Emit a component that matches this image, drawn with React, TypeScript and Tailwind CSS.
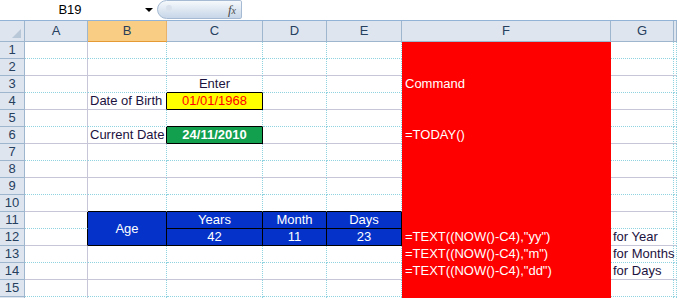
import React from "react";

type BType = "solid" | "dotted" | "black" | "red" | "none";

const RCLS: Record<BType, string> = {
  solid: "border-r border-r-[#c6c6d8]",
  dotted: "border-r border-r-[#8ed3df] [border-right-style:dotted]",
  black: "border-r border-r-black",
  red: "border-r border-r-[#ff0000]",
  none: "border-r border-r-transparent",
};
const BCLS: Record<BType, string> = {
  solid: "border-b border-b-[#c6c6d8]",
  dotted: "border-b border-b-[#8ed3df] [border-bottom-style:dotted]",
  black: "border-b border-b-black",
  red: "border-b border-b-[#ff0000]",
  none: "border-b border-b-transparent",
};

const COLS = ["A", "B", "C", "D", "E", "F", "G", "H"];

type Spec = {
  text?: string;
  cls?: string;
  align?: "left" | "center";
  r?: BType;
  b?: BType;
  span?: boolean;
  skip?: boolean;
};

const BLUE = "bg-[#0533c9] text-white";

const specs: Record<string, Spec> = {
  C3: { text: "Enter", align: "center", b: "black" },
  B4: { text: "Date of Birth", r: "black" },
  C4: { text: "01/01/1968", align: "center", cls: "bg-[#ffff00] text-[#ff0000]", r: "black", b: "black" },
  C5: { b: "black" },
  B6: { text: "Current Date", r: "black" },
  C6: { text: "24/11/2010", align: "center", cls: "bg-[#12a04e] text-white font-bold", r: "black", b: "black" },
  B10: { b: "black" },
  C10: { b: "black" },
  D10: { b: "black" },
  E10: { b: "black" },
  A11: { r: "black" },
  A12: { r: "black" },
  B11: { text: "Age", align: "center", cls: BLUE, r: "black", b: "black", span: true },
  B12: { skip: true },
  C11: { text: "Years", align: "center", cls: BLUE, r: "black", b: "black" },
  D11: { text: "Month", align: "center", cls: BLUE, r: "black", b: "black" },
  E11: { text: "Days", align: "center", cls: BLUE, r: "black", b: "black" },
  C12: { text: "42", align: "center", cls: BLUE, r: "black", b: "black" },
  D12: { text: "11", align: "center", cls: BLUE, r: "black", b: "black" },
  E12: { text: "23", align: "center", cls: BLUE, r: "black", b: "black" },
  F3: { text: "Command" },
  F6: { text: "=TODAY()" },
  F12: { text: '=TEXT((NOW()-C4),"yy")' },
  F13: { text: '=TEXT((NOW()-C4),"m")' },
  F14: { text: '=TEXT((NOW()-C4),"dd")' },
  G12: { text: "for Year" },
  G13: { text: "for Months" },
  G14: { text: "for Days" },
};

function FormulaBar() {
  return (
    <div className="flex h-[21px] items-start border-b border-b-[#93b3d6] bg-white">
      <div className="flex h-[20px] w-[140px] items-center justify-center text-[13px] text-black">B19</div>
      <div className="flex h-[20px] w-[17px] items-center justify-center">
        <div className="h-0 w-0 border-x-[4px] border-t-[4px] border-x-transparent border-t-black" />
      </div>
      <div className="relative flex h-[19px] w-[85px] items-center justify-end rounded-l-[10px] rounded-r-[2px] border border-[#a6bad3] bg-linear-to-b from-[#f6f9fc] to-[#c7d6e8] pr-[5px]">
        <div className="absolute left-[8px] top-[4px] h-[6px] w-[6px] rounded-full bg-[#d9e2ec]" />
        <span className="text-[13px] italic text-[#4a4a4a] [font-family:'Liberation_Serif',serif]">
          f<span className="text-[10px]">x</span>
        </span>
      </div>
    </div>
  );
}

export default function App() {
  const rows: React.ReactNode[] = [];

  rows.push(
    <div
      key="corner"
      className="relative h-[21px] border-b border-r border-b-[#9eb6ce] border-r-[#9eb6ce] bg-[#dfe5ee]"
    >
      <div className="absolute bottom-[3px] right-[3px] h-[9px] w-[9px] bg-[#b9c8d8] [clip-path:polygon(100%_0,100%_100%,0_100%)]" />
    </div>
  );
  COLS.forEach((c) => {
    const sel = c === "B";
    rows.push(
      <div
        key={"h" + c}
        className={
          sel
            ? "flex h-[21px] items-center justify-center border-b border-r border-b-[#e59a33] border-r-[#e9b26a] bg-[#f9cd84] text-[13px] text-[#2a3e58]"
            : "flex h-[21px] items-center justify-center border-b border-r border-b-[#9eb6ce] border-r-[#9eb6ce] bg-[#dfe5ee] text-[13px] text-[#26405f]"
        }
      >
        {c === "H" ? "" : c}
      </div>
    );
  });

  for (let r = 1; r <= 16; r++) {
    rows.push(
      <div
        key={"rh" + r}
        className="flex h-[17px] items-center justify-center border-b border-r border-b-[#9eb6ce] border-r-[#9eb6ce] bg-[#dfe5ee] text-[13px] leading-[16px] text-[#26405f]"
      >
        {r <= 15 ? r : ""}
      </div>
    );
    COLS.forEach((c) => {
      const id = c + r;
      const s = specs[id] || {};
      if (s.skip) return;
      const isF = c === "F";
      let rt: BType = c === "A" ? "solid" : "dotted";
      let bt: BType = r % 2 === 0 ? "solid" : "dotted";
      if (isF) {
        rt = "red";
        bt = "red";
      }
      if (s.r) rt = s.r;
      if (s.b) bt = s.b;
      const base = isF ? "bg-[#ff0000] text-white" : "text-[#1c1240]";
      const alignCls = s.align === "center" ? "justify-center" : "justify-start pl-[2px]";
      rows.push(
        <div
          key={id}
          className={[
            "flex whitespace-nowrap text-[13px] leading-[16px]",
            s.span ? "row-span-2 h-[34px] items-center" : "h-[17px] items-end",
            isF ? "pl-[3px]" : "",
            RCLS[rt],
            BCLS[bt],
            s.cls || base,
            alignCls,
          ].join(" ")}
        >
          {s.text ? <span>{s.text}</span> : null}
        </div>
      );
    });
  }

  return (
    <div className="h-[298px] w-[677px] overflow-hidden bg-white [font-family:'Liberation_Sans',Arial,sans-serif]">
      <FormulaBar />
      <div className="grid grid-cols-[25px_63px_79px_96px_64px_75px_209px_63px_3px]">{rows}</div>
    </div>
  );
}
